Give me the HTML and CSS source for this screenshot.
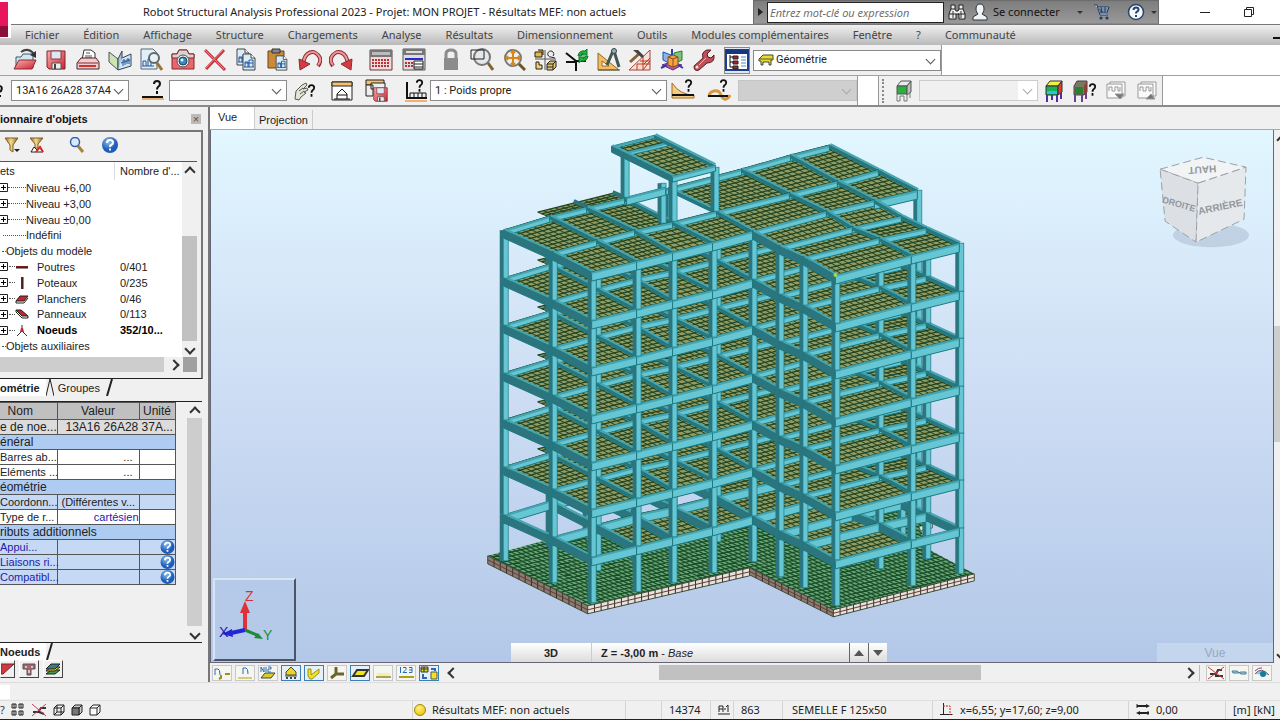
FILE: index.html
```html
<!DOCTYPE html>
<html lang="fr">
<head>
<meta charset="utf-8">
<title>Robot Structural Analysis Professional 2023</title>
<link rel="stylesheet" href="styles.css">
</head>
<body>
<svg class="defs" aria-hidden="true">
  <defs>
    <linearGradient id="gRed" x1="0" y1="0" x2="1" y2="1"><stop offset="0" stop-color="#f9b0b0"/><stop offset="1" stop-color="#cf2230"/></linearGradient>
    <radialGradient id="gBlue" cx=".4" cy=".3"><stop offset="0" stop-color="#8cc0f0"/><stop offset="1" stop-color="#1d5cb8"/></radialGradient>
    <linearGradient id="gGold" x1="0" x2="1"><stop offset="0" stop-color="#8a6420"/><stop offset=".45" stop-color="#f4dc90"/><stop offset="1" stop-color="#8a6420"/></linearGradient>
    <symbol id="help" viewBox="0 0 16 16"><circle cx="8" cy="8" r="8" fill="url(#gBlue)"/><path d="M5 6q0-3 3-3t3 2.500q0 1.500-2 2.500-1 .5-1 2M8 11.500v2" fill="none" stroke="#fff" stroke-width="2"/></symbol>
    <symbol id="plus" viewBox="0 0 9 9"><path d="M.5.5h8v8h-8z" fill="#fff" stroke="#222"/><path d="M2 4.500h5M4.500 2v5" stroke="#000"/></symbol>
    <symbol id="q" viewBox="0 0 10 14"><path d="M2 4q0-3 3-3t3 3q0 1.500-2 3-1 1-1 2.500M5 11v3" fill="none" stroke="#111" stroke-width="2"/></symbol>
    <symbol id="doc" viewBox="0 0 14 18"><path d="M1 1h8l4 4v12H1z" fill="#d8edf8" stroke="#444"/><path d="M9 1v4h4" fill="#fff" stroke="#444"/><path d="M3 14v-5h3v5M7 14v-7h4v7M2 14h10M3 10h8" fill="none" stroke="#28559a"/></symbol>
    <symbol id="floppy" viewBox="0 0 20 20"><path d="M1 1h18v18H3l-2-2z" fill="url(#gRed)" stroke="#7d2530"/><path d="M5 1h10v8H5z" fill="#dbe9f2" stroke="#8d3a45"/><path d="M6 13h9v6H6z" fill="#eee" stroke="#555"/><path d="M8 14h2v5H8z" fill="#444"/></symbol>
  </defs>
</svg>
<div class="app">
  <header class="titlebar">
    <span class="logo"></span>
    <h1 class="title">Robot Structural Analysis Professional 2023 - Projet: MON PROJET - Résultats MEF: non actuels</h1>
    <div class="info">
      <button class="info-arrow" aria-label="Développer"></button>
      <input class="search" type="text" placeholder="Entrez mot-clé ou expression" aria-label="Recherche">
      <button class="ghost" aria-label="Rechercher"><svg width="18" height="18" viewBox="0 0 18 18"><path d="M3 2h4v4l1 2h2l1-2V2h4v4l2 5v5h-6v-5H8v5H1v-5l2-5zM3 6h4M11 6h4M1 11h7M10 11h7" fill="#eee" stroke="#222"/><path d="M5 8v7M13 8v7" stroke="#333"/></svg></button>
      <button class="ghost signin"><svg width="16" height="18" viewBox="0 0 16 18"><path d="M8 1c3 0 4 2 4 5 0 2-1 4-2 5l5 3v3H1v-3l5-3C5 10 4 8 4 6c0-3 1-5 4-5z" fill="#eef3f8" stroke="#333"/></svg><span>Se connecter</span><i class="tri"></i></button>
      <button class="ghost cart" aria-label="Panier"><svg width="18" height="16" viewBox="0 0 18 16"><path d="M1 1h3l3 10h8M5 3h11l-2 6H7" fill="#dce6f5" stroke="#1f3864"/><path d="M6 5h9M7 7h8M8 3l1 6M12 3v6" stroke="#1f3864" fill="none"/><circle cx="8" cy="14" r="1.500" fill="#1f3864"/><circle cx="14" cy="14" r="1.500" fill="#1f3864"/></svg></button>
      <button class="ghost helpbtn" aria-label="Aide"><svg width="18" height="18" viewBox="0 0 18 18"><circle cx="9" cy="9" r="7.500" fill="#f4f7fb" stroke="#26446e" stroke-width="1.500"/><path d="M6.500 7q0-2.500 2.500-2.500t2.500 2.200q0 1.300-1.500 2-1 .6-1 1.800M9 12v2" fill="none" stroke="#26446e" stroke-width="2"/></svg><i class="tri"></i></button>
    </div>
    <div class="winbtns">
      <button class="ghost" aria-label="Réduire"><svg width="12" height="12"><path d="M1 6.500h10" stroke="#222"/></svg></button>
      <button class="ghost" aria-label="Restaurer"><svg width="12" height="12" viewBox="0 0 12 12"><path d="M1.500 3.500h7v7h-7zM3.500 3V1.500h7v7H9" fill="none" stroke="#222"/></svg></button>
    </div>
  </header>

  <nav class="menubar">
    <button>Fichier</button><button>Édition</button><button>Affichage</button><button>Structure</button><button>Chargements</button><button>Analyse</button><button>Résultats</button><button>Dimensionnement</button><button>Outils</button><button>Modules complémentaires</button><button>Fenêtre</button><button>?</button><button>Communauté</button>
    <span class="mdi-min"></span>
  </nav>

  <div class="toolbar tb1">
    <div class="group g11">
      <button aria-label="Ouvrir"><svg viewBox="0 0 24 24"><path d="M3 9h5l2-3h10v14H3z" fill="#cfe8f4" stroke="#456"/><path d="M1 21l5-9h17l-4 9z" fill="url(#gRed)" stroke="#8a2c30"/><path d="M8 4q7-5 13 2" fill="none" stroke="#444" stroke-width="2"/><path d="M23 3v7l-6-3z" fill="#333"/></svg></button>
      <button aria-label="Enregistrer"><svg viewBox="-2 -2 24 24"><use href="#floppy" width="20" height="20"/></svg></button>
      <button aria-label="Imprimer"><svg viewBox="0 0 24 24"><path d="M6 12l2-10h7l4 3v7z" fill="#fff" stroke="#333"/><path d="M10 5h4M9 8h7M9 10h7" stroke="#555"/><path d="M1 15l4-5h15l3 4v7H1z" fill="#f0cccc" stroke="#44252a"/><path d="M2 15h20" stroke="#8a2c35"/><path d="M3 18h17" stroke="#c33" stroke-width="2"/></svg></button>
      <button aria-label="Note de calcul"><svg viewBox="0 0 24 24"><path d="M1 4l9 7v11l-9-8z" fill="#cfe3b0" stroke="#456"/><path d="M10 11l4-8v12l-4 7z" fill="#a9c8d8" stroke="#345"/><path d="M10 22l13-4V6l-9 4" fill="#cfe6f2" stroke="#345"/><path d="M15 18v-6h2v5M19 16v-5h2v5M13 15l9-3" fill="none" stroke="#28559a"/></svg></button>
      <button aria-label="Aperçu"><svg viewBox="0 0 24 24"><path d="M2 1h12l4 4v16H2z" fill="#dff0f9" stroke="#567"/><path d="M4 18v-5h3v5M9 18v-7h3v7M3 18h12" fill="none" stroke="#28559a"/><circle cx="15" cy="10" r="5" fill="#e4f2fa" stroke="#666" stroke-width="2"/><path d="M18 15l5 7" stroke="#9b7335" stroke-width="3"/></svg></button>
      <button aria-label="Capture"><svg viewBox="0 0 24 24"><path d="M1 6h5l2-4h8l2 4h5v15H1z" fill="#e9666c" stroke="#83282c"/><path d="M1 6h5l2-4h8l2 4h5v4H1z" fill="#d8d2d2" stroke="#83282c"/><circle cx="12" cy="13" r="6" fill="#eee" stroke="#555"/><circle cx="12" cy="13" r="4" fill="#3a86c0" stroke="#245"/><circle cx="11" cy="12" r="1.500" fill="#dff"/></svg></button>
      <button aria-label="Supprimer"><svg viewBox="0 0 24 24"><path d="M2 2l20 20M21 2L3 21" stroke="#c43640" stroke-width="3"/><path d="M2 2l19 19M20 2L3 20" stroke="#ee8488"/></svg></button>
      <button aria-label="Copier"><svg viewBox="0 0 24 24"><use href="#doc" x="2" y="0" width="14" height="18"/><use href="#doc" x="8" y="5" width="14" height="18"/></svg></button>
      <button aria-label="Coller"><svg viewBox="0 0 24 24"><path d="M2 3h16v17H2z" fill="#c98a3a" stroke="#6a4316"/><path d="M6 1h8v4H6z" fill="#888" stroke="#333"/><use href="#doc" x="9" y="7" width="13" height="16"/></svg></button>
      <button aria-label="Annuler"><svg viewBox="0 0 24 24"><path d="M5 17C6 3 17 0 22 10q1 4-2 8" fill="none" stroke="#8c2b31" stroke-width="4"/><path d="M5 17C6 3 17 0 22 10q1 4-2 7" fill="none" stroke="#f0969a" stroke-width="2"/><path d="M1 11l11 5-10 6z" fill="#d53c42" stroke="#8c2b31"/></svg></button>
      <button aria-label="Rétablir"><svg viewBox="0 0 24 24"><path d="M19 17C18 3 7 0 2 10q-1 4 2 8" fill="none" stroke="#8c2b31" stroke-width="4"/><path d="M19 17C18 3 7 0 2 10q-1 4 2 7" fill="none" stroke="#f0969a" stroke-width="2"/><path d="M23 11l-11 5 10 6z" fill="#d53c42" stroke="#8c2b31"/></svg></button>
    </div>
    <div class="group g2">
      <button aria-label="Calculer"><svg viewBox="0 0 24 24"><path d="M1 2h22v20H1z" fill="#f3d8d8" stroke="#5a3c3e"/><path d="M1 2h22v7H1z" fill="#777"/><path d="M3 4h18v3H3z" fill="#bbb"/><path d="M3 12h18M3 15h18M3 18h18" stroke="#b8323c" stroke-width="2" stroke-dasharray="2 1"/></svg></button>
      <button aria-label="Options de calcul"><svg viewBox="0 0 24 24"><path d="M1 1h22v21H1z" fill="#ddd" stroke="#555"/><path d="M1 1h22v6H1z" fill="#777"/><path d="M4 3h16v2H4z" fill="#ddd"/><path d="M3 11h18" stroke="#2a2ad0" stroke-width="2"/><path d="M3 15h8M3 18h8" stroke="#b8323c" stroke-width="2" stroke-dasharray="2 1"/><path d="M12 13h9v8h-9zM12 16h9M12 19h9" fill="#fff" stroke="#222"/></svg></button>
    </div>
    <div class="group g9">
      <button aria-label="Verrou"><svg viewBox="0 0 24 24"><path d="M7 11V6q0-4 5-4t5 4v5" fill="none" stroke="#8c8c8c" stroke-width="3"/><path d="M5 10h14v12H5z" fill="#8c8c8c"/></svg></button>
      <button aria-label="Zoom fenêtre"><svg viewBox="0 0 24 24"><circle cx="12" cy="9" r="8" fill="#e4e8ea" stroke="#777" stroke-width="2"/><path d="M1 2h13v9H1z" fill="none" stroke="#222"/><path d="M18 15l5 7" stroke="#7d6433" stroke-width="3"/></svg></button>
      <button aria-label="Zoom tout"><svg viewBox="0 0 24 24"><circle cx="11" cy="10" r="8" fill="#eee" stroke="#777" stroke-width="2"/><path d="M11 3v14M4 10h14M9 5l2-2 2 2M9 15l2 2 2-2M6 8l-2 2 2 2M16 8l2 2-2 2" fill="none" stroke="#d78618" stroke-width="2"/><path d="M17 16l6 6" stroke="#6b5426" stroke-width="3"/></svg></button>
      <button aria-label="Vues"><svg viewBox="0 0 24 24"><path d="M12 2v20M2 11h21" stroke="#555"/><path d="M2 4h7v5H2zM5 2h5v5" fill="#e5b640" stroke="#222"/><path d="M20 8a3 3 0 1 0-2 1l4 1" fill="none" stroke="#222"/><path d="M3 14h3v3h3v4H3z" fill="#f5d268" stroke="#222"/><path d="M14 16l3-3h6v6l-3 3h-6zM14 16h6v6M20 16l3-3M14 19h6" fill="#e9c768" stroke="#222"/></svg></button>
      <button aria-label="Repère"><svg viewBox="0 0 24 24"><path d="M11 12v11M1 5l10 8h10M1 14h10" stroke="#111" stroke-width="2" fill="none"/><path d="M13 8q1-6 7-5l2-2v6h-6l2-2-2 3z" fill="#20b040" stroke="#0a7a28"/><path d="M23 8q-1 6-7 5l-2 2V9h6l-2 2 3-3z" fill="#20b040" stroke="#0a7a28"/></svg></button>
      <button aria-label="Géométrie"><svg viewBox="0 0 24 24"><path d="M1 5v17h21z" fill="#f5bd60" stroke="#8b6a2b"/><path d="M5 13v5h7z" fill="#fff" stroke="#8b6a2b"/><path d="M16 3l-6 14M17 3l5 16" stroke="#455" stroke-width="3"/><circle cx="17" cy="3" r="2.500" fill="#9ab" stroke="#344"/><path d="M1 22h22" stroke="#555"/></svg></button>
      <button aria-label="Structure"><svg viewBox="0 0 24 24"><path d="M1 22L22 2v20z" fill="#f8e2d4" stroke="#a54540"/><path d="M9 22v-6M15 22V9M9 16h13M15 22l7-9M16 16l6-6M12 13h10" stroke="#c8321e" fill="none"/><path d="M2 14L12 5" stroke="#8a6030" stroke-width="3"/><path d="M5 2l9 8 2-2-6-6z" fill="#444"/></svg></button>
      <button aria-label="Vue 3D"><svg viewBox="0 0 24 24"><path d="M3 4l8 3v9l-8-4z" fill="#8db5e8" stroke="#1f50a8"/><path d="M14 5l8-2v9l-8 4z" fill="#7cc47e" stroke="#257a2c"/><path d="M2 17l9-3 11 3-9 5z" fill="#b7559e" stroke="#6b2a80"/><path d="M8 9l5-2 5 2v8l-5 2-5-2z" fill="#f1a545" stroke="#8a4a1a"/><path d="M8 9l5 2 5-2M13 11v8" fill="none" stroke="#8a4a1a"/><path d="M12 1v6M1 20l6-3M23 20l-5-3" stroke="#2b3fb0" stroke-width="2"/></svg></button>
      <button aria-label="Outils"><svg viewBox="0 0 24 24"><path d="M3 18l9-8q-2-6 4-8l4 0-4 4 1 3 3 1 3-3q1 8-7 8L8 22q-5 2-5-4z" fill="#c05058" stroke="#5a1a20"/><circle cx="6" cy="19" r="1.500" fill="#f6dede"/><path d="M8 17l7-7" stroke="#eeb4b8"/></svg></button>
    </div>
    <button class="pressed" aria-label="Disposition"><svg viewBox="0 0 24 24"><path d="M1 2h22v20H1z" fill="#fff" stroke="#1b3f8c" stroke-width="2"/><path d="M1 2h22v4H1z" fill="#16357d"/><path d="M5 7v12M5 9h4M5 14h4M5 19h4" stroke="#111"/><path d="M8 8h5v3H8zM8 13h5v3H8zM8 18h5v3H8z" fill="#a23" stroke="#222"/><path d="M16 9h5M16 12h5M16 15h5M16 18h5" stroke="#4a8ad0"/></svg></button>
    <label class="combo layout"><svg width="16" height="14" viewBox="0 0 16 14"><path d="M1 6l4-4h10v5h-2v5h-2V9H5v3H3V8H1z" fill="#e6de20" stroke="#444"/><path d="M2 6h12" stroke="#555"/></svg><select aria-label="Disposition"><option>Géométrie</option></select></label>
    <span class="tb-end"></span>
  </div>

  <div class="toolbar tb2">
    <svg class="cropq" viewBox="0 0 11 24"><path d="M0 7q3 1 1 5l-1 1M0 17h1" fill="none" stroke="#111" stroke-width="2"/></svg>
    <label class="combo c-node"><select aria-label="Sélection noeuds"><option>13A16 26A28 37A4</option></select></label>
    <button class="w39" aria-label="Sélection barres"><svg viewBox="0 0 24 24"><use href="#q" x="11" y="1" width="10" height="14"/><path d="M1 18h21" stroke="#111" stroke-width="2"/><path d="M1 20h22" stroke="#efb276" stroke-width="2"/></svg></button>
    <label class="combo c-bar"><select aria-label="Barres"><option></option></select></label>
    <button class="w34" aria-label="Sélection spéciale"><svg viewBox="0 0 24 24"><path d="M2 20l1-8 6-6 4-2 1 2-4 4 4-1 1 2-4 2 2 1-5 4-2 3z" fill="#e4e6d4" stroke="#555"/><path d="M6 12l4-3M7 15l4-3" stroke="#555"/><use href="#q" x="14" y="5" width="9" height="13"/></svg></button>
    <button class="w40" aria-label="Attributs"><svg viewBox="0 0 24 24"><path d="M2 3h20v18H2z" fill="#fff" stroke="#222"/><path d="M2 3h20v4H2z" fill="#f5c070" stroke="#222"/><path d="M7 20v-5l5-5 5 5v5M7 16h10M4 20h16" fill="none" stroke="#111"/></svg></button>
    <button class="w32" aria-label="Enregistrer attributs"><svg viewBox="0 0 24 24"><path d="M1 1h18v5H1z" fill="#f5c070" stroke="#222"/><path d="M1 6h7v11H1zM6 4h14v6H6z" fill="#eee" stroke="#222"/><use href="#floppy" x="8" y="8" width="15" height="15"/></svg></button>
    <button class="w44" aria-label="Charges"><svg viewBox="0 0 24 24"><path d="M3 3v16h20" fill="none" stroke="#111" stroke-width="2"/><path d="M6 18v-4h16v4M10 14v4M14 14v4M18 14v4" fill="none" stroke="#111"/><path d="M1 22h22" stroke="#efb276" stroke-width="2"/><use href="#q" x="11" y="0" width="9" height="13"/></svg></button>
    <label class="combo c-case"><select aria-label="Cas de charge"><option>1 : Poids propre</option></select></label>
    <button class="w32" aria-label="Mode"><svg viewBox="0 0 24 24"><path d="M1 4v15h22v-3Q9 16 1 4z" fill="#f4cd85" stroke="#a96b22"/><path d="M1 16h22" stroke="#111" stroke-width="2"/><use href="#q" x="13" y="0" width="9" height="13"/></svg></button>
    <button class="w40" aria-label="Déformée"><svg viewBox="0 0 24 24"><path d="M2 18q0-5 5-6t7 4 5 4 4-4" fill="none" stroke="#d79845" stroke-width="3"/><path d="M1 17h20" stroke="#111" stroke-width="2"/><use href="#q" x="12" y="0" width="9" height="13"/></svg></button>
    <label class="combo c-off"><select disabled aria-label="Mode propre"><option></option></select></label>
    <span class="gapwhite"></span>
    <div class="phase">
      <span class="grip"></span>
      <button aria-label="Phases"><svg viewBox="0 0 24 24"><path d="M5 7l4-5h10l-4 5z" fill="#e8ece8" stroke="#555"/><path d="M5 7h10v8H5z" fill="#28b040" stroke="#555"/><path d="M15 7l4-5v11l-4 3z" fill="#b8c0b8" stroke="#555"/><path d="M5 15v7h3v-5h4v5h3v-7M18 13v6" fill="none" stroke="#777"/></svg></button>
      <label class="combo c-phase"><select disabled aria-label="Phase"><option></option></select></label>
      <button aria-label="Phase active"><svg viewBox="0 0 24 24"><path d="M4 7l4-5h12l-4 5z" fill="#f3ef40" stroke="#333"/><path d="M4 7h12v9H4z" fill="#18b058" stroke="#333"/><path d="M16 7l4-5v11l-4 3z" fill="#e03c30" stroke="#333"/><path d="M5 12h10v3H5z" fill="#30c0e0"/><path d="M5 16v7M10 16v5M15 16v7M19 14v6" stroke="#5030a0" stroke-width="2"/></svg></button>
      <button aria-label="Aide phase"><svg viewBox="0 0 24 24"><path d="M1 7l3-5h10v11l-3 3H1z" fill="#777a60" stroke="#444"/><path d="M2 8h8v7H2z" fill="#2a8030"/><path d="M11 7l3-5v11l-3 3z" fill="#8a4038"/><path d="M2 16v7M9 16v7M13 14v6" stroke="#704090" stroke-width="2"/><use href="#q" x="15" y="4" width="9" height="13"/></svg></button>
      <button aria-label="Descendre"><svg viewBox="0 0 24 24" fill="#fafafa" stroke="#999"><path d="M6 3h15v14H6z"/><path d="M3 5h15v14H3z"/><path d="M5 12V8h3v4h3V8h3v4h2V8"/><path d="M11 15h9l-4 5z" fill="#777"/></svg></button>
      <button aria-label="Monter"><svg viewBox="0 0 24 24" fill="#fafafa" stroke="#999"><path d="M6 3h15v14H6z"/><path d="M3 5h15v14H3z"/><path d="M5 12V8h3v4h3V8h3v4h2V8"/><path d="M11 20h9l-4-5z" fill="#777"/></svg></button>
    </div>
  </div>

  <main class="work">
    <aside class="side">
      <div class="side-head"><h2>ionnaire d'objets</h2><button class="close" aria-label="Fermer">×</button></div>
      <div class="inspector">
        <div class="filters">
          <button aria-label="Filtrer"><svg width="16" height="16" viewBox="0 0 16 16"><path d="M1 1h13L9 8v7l-3-2V8z" fill="url(#gGold)" stroke="#806020"/><path d="M10 12h6l-3 3z" fill="#222"/></svg></button>
          <button aria-label="Filtre spécial"><svg width="16" height="16" viewBox="0 0 16 16"><path d="M1 1h13L9 7v4H6V7z" fill="url(#gGold)" stroke="#806020"/><path d="M2 15l3-5 3 3 3-3 3 5z" fill="#fff" stroke="#222"/><path d="M7 15l4-5 3 5" fill="none" stroke="#d22" stroke-width="2"/></svg></button>
          <button class="find" aria-label="Chercher"><svg width="16" height="16" viewBox="0 0 16 16"><path d="M9 9l5 6" stroke="#a8843a" stroke-width="3"/><circle cx="6" cy="5" r="4.500" fill="#d5ebfb" stroke="#3860a8" stroke-width="1.500"/></svg></button>
          <button class="hlp" aria-label="Aide"><svg width="16" height="16"><use href="#help"/></svg></button>
        </div>
        <div class="tree-area">
          <div class="tree">
            <div class="tree-head"><span>ets</span><span>Nombre d'...</span></div>
            <ul class="nodes">
              <li><svg class="pm"><use href="#plus"/></svg><i class="dots"></i><span>Niveau +6,00</span></li>
              <li><svg class="pm"><use href="#plus"/></svg><i class="dots"></i><span>Niveau +3,00</span></li>
              <li><svg class="pm"><use href="#plus"/></svg><i class="dots"></i><span>Niveau ±0,00</span></li>
              <li><i class="dots long"></i><span>Indéfini</span></li>
              <li><i class="dots tiny"></i><span>Objets du modèle</span></li>
              <li><svg class="pm"><use href="#plus"/></svg><i class="dots sm"></i><svg class="gl" viewBox="0 0 14 12"><path d="M1 6h12" stroke="#7c1a1a" stroke-width="2"/><path d="M1 7h12" stroke="#222"/></svg><span class="nm">Poutres</span><span>0/401</span></li>
              <li><svg class="pm"><use href="#plus"/></svg><i class="dots sm"></i><svg class="gl" viewBox="0 0 14 12"><path d="M7 0v12" stroke="#7c1a1a" stroke-width="2"/><path d="M8 0v12" stroke="#222"/></svg><span class="nm">Poteaux</span><span>0/235</span></li>
              <li><svg class="pm"><use href="#plus"/></svg><i class="dots sm"></i><svg class="gl" viewBox="0 0 14 12"><path d="M1 8l4-5h8L9 8z" fill="#c4262c" stroke="#222"/><path d="M1 8v2h8l4-5" fill="none" stroke="#222"/></svg><span class="nm">Planchers</span><span>0/46</span></li>
              <li><svg class="pm"><use href="#plus"/></svg><i class="dots sm"></i><svg class="gl" viewBox="0 0 14 12"><path d="M1 2h5l7 6H7z" fill="#c4262c" stroke="#222"/><path d="M1 2v2l6 6h6V8" fill="none" stroke="#222"/></svg><span class="nm">Panneaux</span><span>0/113</span></li>
              <li class="sel"><svg class="pm"><use href="#plus"/></svg><i class="dots sm"></i><svg class="gl" viewBox="0 0 14 12"><path d="M7 1v6l-5 5M7 7l5 5" fill="none" stroke="#333"/><path d="M6 4h2l1 4H5z" fill="#c4262c"/></svg><span class="nm">Noeuds</span><span>352/10...</span></li>
              <li><i class="dots tiny"></i><span>Objets auxiliaires</span></li>
            </ul>
          </div>
          <div class="vbar"><i class="chev up"></i><i class="thumb t1"></i><i class="chev down"></i></div>
        </div>
        <div class="hbar-left"><span class="hthumb"></span><i class="chev right"></i><span class="corner"></span></div>
      </div>
      <div class="tabs"><button class="tab on">ométrie</button><svg width="8" height="17"><path d="M0 17L4 0l4 17" fill="none" stroke="#222"/></svg><button class="tab">Groupes</button><svg width="8" height="17"><path d="M1 17L6 0" stroke="#222" stroke-width="2"/></svg></div>
      <div class="props">
        <table class="grid">
          <colgroup><col class="k1"><col class="k2"><col class="k3"></colgroup>
          <thead><tr><th>Nom</th><th>Valeur</th><th>Unité</th></tr></thead>
          <tbody>
            <tr class="gray"><td>e de noe...</td><td colspan="2" class="pad">13A16 26A28 37A...</td></tr>
            <tr class="sec"><td colspan="3">énéral</td></tr>
            <tr><td>Barres ab...</td><td class="r">...</td><td></td></tr>
            <tr><td>Eléments ...</td><td class="r">...</td><td></td></tr>
            <tr class="sec"><td colspan="3">éométrie</td></tr>
            <tr class="blue"><td>Coordonn...</td><td class="pad4">(Différentes v...</td><td></td></tr>
            <tr><td>Type de r...</td><td class="r0 link">cartésien</td><td></td></tr>
            <tr class="sec"><td colspan="3">ributs additionnels</td></tr>
            <tr class="blue link"><td>Appui...</td><td></td><td class="r0"><svg width="15" height="14"><use href="#help"/></svg></td></tr>
            <tr class="blue link"><td>Liaisons ri...</td><td></td><td class="r0"><svg width="15" height="14"><use href="#help"/></svg></td></tr>
            <tr class="blue link"><td>Compatibl...</td><td></td><td class="r0"><svg width="15" height="14"><use href="#help"/></svg></td></tr>
          </tbody>
        </table>
        <div class="vbar"><i class="chev up"></i><i class="thumb t2"></i><i class="chev down"></i></div>
      </div>
      <div class="tabs bottom"><button class="tab on">Noeuds</button><svg width="8" height="17"><path d="M1 17L6 0" stroke="#222" stroke-width="2"/></svg></div>
      <div class="minis">
        <button aria-label="Barre"><svg width="14" height="14" viewBox="0 0 14 14"><path d="M0 2h13L2 12H0z" fill="#cf3a42" stroke="#7c2026"/></svg></button>
        <button aria-label="Section"><svg width="14" height="14" viewBox="0 0 14 14"><path d="M1 2h12v5H9v6H5V7H1z" fill="#a8626a" stroke="#555"/><path d="M3 4h2v2H3zM9 4h2v2H9zM6 8h2v3H6z" fill="#e8c0c0"/></svg></button>
        <button aria-label="Couches"><svg width="16" height="14" viewBox="0 0 16 14"><path d="M1 12l5-4h9l-5 4z" fill="#38a040" stroke="#222"/><path d="M1 9l5-4h9l-5 4z" fill="#e8d020" stroke="#222"/><path d="M1 7l5-5h9l-5 5z" fill="#3f7a80" stroke="#222"/></svg></button>
      </div>
    </aside>

    <section class="view">
      <div class="view-tabs"><button class="vt on">Vue</button><button class="vt">Projection</button></div>
      <div class="stage">
        <div class="canvas">
          <svg class="model" id="model" viewBox="211 131 1063 532" role="img" aria-label="Modèle 3D du bâtiment"></svg>
          <div class="axes"><svg width="80" height="80" viewBox="0 0 80 80"><path d="M30 50V28" stroke="#e03038" stroke-width="4"/><path d="M30 21l5 12H25z" fill="#e03038"/><path d="M30 50l-14 3" stroke="#2424d8" stroke-width="4"/><path d="M7 54l10-5 1 8z" fill="#2424d8"/><path d="M30 50l12 5" stroke="#208a38" stroke-width="3"/><path d="M48 59l-9-1 4-5z" fill="#208a38"/><text x="30" y="21" fill="#d83038">Z</text><text x="4" y="57" fill="#1818b0">X</text><text x="48" y="60" fill="#208a38">Y</text></svg></div>
          <div class="level"><button class="mode">3D</button><button class="lvl"><b>Z = -3,00 m</b> - <i>Base</i></button><button class="step" aria-label="Niveau supérieur"><i class="t-up"></i></button><button class="step" aria-label="Niveau inférieur"><i class="t-down"></i></button></div>
          <button class="vuebtn">Vue</button>
        </div>
        <div class="edge"><i class="chev up"></i><span class="edge-thumb"></span><i class="chev down"></i></div>
      </div>
      <div class="view-foot">
        <div class="disp">
          <button aria-label="Numéros de noeuds"><svg viewBox="0 0 18 14"><path d="M2 9V3h3q2 0 2 6" fill="none" stroke="#2a6ab8"/><path d="M12 8h5M8 9v3l-2 1" stroke="#a09010" stroke-width="2"/></svg></button>
          <button aria-label="Numéros de barres"><svg viewBox="0 0 18 14"><path d="M7 8V2h3q2 0 2 6" fill="none" stroke="#2a6ab8"/><path d="M2 12h2M14 12h2M4 12h10" stroke="#b0a010"/></svg></button>
          <button aria-label="Panneaux"><svg viewBox="0 0 18 14"><path d="M2 12l4-5h10l-4 5z" fill="#d8d020" stroke="#444"/><path d="M2 6V1l3 5V1M7 1v5M9 1h3v2H9v3h3" fill="none" stroke="#2a6ab8"/></svg></button>
          <button class="on" aria-label="Appuis"><svg viewBox="0 0 18 14"><path d="M9 1l5 5v3H4V6z" fill="#e8d820" stroke="#444"/><path d="M3 10h12" stroke="#444"/><path d="M4 12h2M8 12h2M12 12h2" stroke="#444" stroke-width="2"/></svg></button>
          <button class="on" aria-label="Sections"><svg viewBox="0 0 18 14"><path d="M3 3h3v6l8-6v4l-7 6H5l-2-3z" fill="#f0e420" stroke="#a09010"/></svg></button>
          <button aria-label="Repères locaux"><svg viewBox="0 0 18 14"><path d="M8 1v7l-5 4M8 8h8" fill="none" stroke="#6b6430" stroke-width="3"/></svg></button>
          <button class="on" aria-label="Épaisseurs"><svg viewBox="0 0 18 14"><path d="M2 10l4-6h11l-4 6z" fill="#f0e420" stroke="#333" stroke-width="2"/></svg></button>
          <button aria-label="Charges"><svg viewBox="0 0 18 14"><path d="M2 11h15" stroke="#a8a060" stroke-width="2"/><path d="M3 7h13v3H3z" fill="#f8f0a0"/></svg></button>
          <button aria-label="Valeurs"><svg viewBox="0 0 18 14"><path d="M3.500 1v6M6 1.500h3v2L6 6.500h4M12 1.500h3v5h-3M12 4h3" fill="none" stroke="#2a6ab8"/><path d="M2 11h15" stroke="#b0a010" stroke-width="2"/></svg></button>
          <button class="on" aria-label="Affichage"><svg viewBox="0 0 18 14"><path d="M1 1h7v5H1zM4 1v5M1 3h7" fill="#e0d820" stroke="#333"/><path d="M11 6h6v7h-6z" fill="#f0e420" stroke="#555"/><path d="M11 3h4v2M3 8v4h4" fill="none" stroke="#2a6ab8" stroke-width="2"/></svg></button>
        </div>
        <i class="chev left"></i>
        <div class="track"><span class="track-thumb"></span></div>
        <i class="chev right"></i>
        <div class="disp r3">
          <button aria-label="Masquer"><svg viewBox="0 0 18 14"><path d="M3 8h6l2-4h4M8 10h8" stroke="#333" stroke-width="2" fill="none"/><path d="M1 1l16 12M17 1L1 13" stroke="#d03848"/></svg></button>
          <button aria-label="Lunettes"><svg viewBox="0 0 18 14"><path d="M2 5h5l4 3h5V6h-5L8 7H3z" fill="#9fd0e8" stroke="#4a7898"/></svg></button>
          <button aria-label="Visibilité"><svg viewBox="0 0 18 14"><path d="M2 8q6-8 14 1" fill="#90c8e0" stroke="#667"/><circle cx="10" cy="8" r="3" fill="#1a7a9a"/><path d="M2 5q4-4 7-3" stroke="#a33a80" fill="none"/></svg></button>
        </div>
      </div>
    </section>
  </main>

  <div class="cmd"><span class="cmd-field"></span></div>

  <footer class="status">
    <div class="st icons">
      <span>?</span>
      <svg width="14" height="14" viewBox="0 0 14 14"><path d="M1 5V1h4v4zM8 5V1h4v4zM1 12V8h4v4zM8 12V8h4v4zM3 1v4M10 1v4M3 8v4M10 8v4" fill="none" stroke="#222"/></svg>
      <svg width="16" height="14" viewBox="0 0 16 14"><path d="M2 9h5l3-4h5M8 9l5 2" fill="none" stroke="#333" stroke-width="2"/><path d="M1 1l14 12M15 1L1 13" stroke="#c04060"/></svg>
      <svg width="12" height="12" viewBox="0 0 12 12"><path d="M1 4h7v7H1zM1 4l3-3h7v7l-3 3M8 4l3-3M4 1v7h7M4 8l-3 3" fill="none" stroke="#222"/></svg>
      <svg width="12" height="12" viewBox="0 0 12 12"><path d="M1 4l3-3h7v7l-3 3V4zM8 4l3-3" fill="#ccc" stroke="#222"/><path d="M1 4h7v7H1z" fill="#777" stroke="#222"/></svg>
      <svg width="12" height="12" viewBox="0 0 12 12"><path d="M1 4l3-3h7v7l-3 3H1zM1 4h7v7M8 4l3-3" fill="#fff" stroke="#222"/></svg>
    </div>
    <div class="st res"><span class="dot"></span>Résultats MEF: non actuels</div>
    <div class="st"></div>
    <div class="st">14374</div>
    <div class="st"><svg width="12" height="12" viewBox="0 0 12 12"><path d="M1 8V2h4v6M1 5h4M6 5h2M10 8V1L8 3M0 10h12" fill="none" stroke="#222"/></svg></div>
    <div class="st">863</div>
    <div class="st sec">SEMELLE F 125x50</div>
    <div class="st"><svg width="14" height="14" viewBox="0 0 14 14"><path d="M3.500 0v11.500h9M0 11.500h4" fill="none" stroke="#222"/><path d="M3 3h7v9" fill="none" stroke="#c22" stroke-dasharray="2 1"/></svg>x=6,55; y=17,60; z=9,00</div>
    <div class="st"><svg width="14" height="12" viewBox="0 0 14 12"><path d="M1 2h11M3 9h10" stroke="#222" stroke-width="2"/><path d="M1 0v4M12 7v4" stroke="#222"/><path d="M0 9l4-2v4zM14 2l-4-2v4z" fill="#222"/></svg>0,00</div>
    <div class="st">[m] [kN]</div>
  </footer>
</div>
<script src="model.js"></script>
</body>
</html>
```

FILE: styles.css
```css
* { box-sizing: border-box; }
body { margin: 0; background: #f0f0f0; font: 11px/14px "Liberation Sans", Arial, sans-serif; color: #222; }
button { font: inherit; color: inherit; border: 0; background: none; padding: 0; margin: 0; }
h1, h2, ul { margin: 0; padding: 0; font-weight: normal; }
.defs { position: absolute; width: 0; height: 0; }
.app { display: flex; flex-direction: column; height: 100vh; overflow: hidden; }

/* Title bar */
.titlebar { display: flex; align-items: flex-start; height: 24px; background: #fff; font: 11px/24px "Noto Sans", sans-serif; position: relative; z-index: 1; }
.logo { width: 11px; height: 36px; margin-top: 2px; background: linear-gradient(#e8175d 0 24px, #8c0f38 24px); border-right: 3px solid #fff; border-bottom: 1px solid #fff; }
.title { flex: 1; padding-left: 132px; font-size: 11px; color: #222; white-space: nowrap; }
.info { display: flex; align-items: center; width: 406px; height: 24px; background: linear-gradient(#7d7d7d, #999); border: 1px solid #6c6c6c; border-bottom-color: #888; }
.info-arrow { width: 13px; height: 22px; display: grid; place-items: center; }
.info-arrow::before { content: ""; border: 4px solid transparent; border-left: 5px solid #222; border-right: 0; }
.search { width: 177px; height: 21px; border: 1px solid #222; background: #fff; padding: 0 2px; font: italic 11px "Open Sans", sans-serif; flex: none; }
.search::placeholder { color: #666; opacity: 1; }
.ghost { display: flex; align-items: center; white-space: nowrap; flex: none; }
.info .ghost { margin-left: 4px; }
.info .signin { margin-left: 6px; gap: 5px; color: #111; font: 11px/20px "Noto Sans", sans-serif; }
.tri { border: 3px solid transparent; border-top-color: #333; border-bottom: 0; }
.signin .tri { margin-left: 12px; }
.info .cart { margin-left: 10px; }
.info .helpbtn { margin-left: 16px; gap: 6px; }
.winbtns { display: flex; gap: 32px; width: 121px; height: 24px; padding-left: 40px; }

/* Menu */
.menubar { display: flex; gap: 24px; align-items: center; height: 21px; padding-left: 25px; background: linear-gradient(#f0f0f0, #b9b9b9); border-top: 1px solid #777; font: 11px/20px "Noto Sans", sans-serif; color: #444; white-space: nowrap; }
.mdi-min { margin-left: auto; width: 7px; height: 2px; margin-top: 6px; background: #111; }

/* Toolbars */
.toolbar { display: flex; align-items: center; background: #fff; border-bottom: 1px solid #a0a0a0; }
.toolbar button { display: grid; place-items: center; flex: none; }
.toolbar button svg { width: 24px; height: 24px; }
.tb1 { height: 31px; padding-left: 9px; background: linear-gradient(90deg, #f0f0f0 942px, #fff 942px); }
.tb2 { height: 31px; background: #f0f0f0; border-bottom: 2px solid #8a8a8a; }
.group { display: grid; flex: none; }
.g11 { grid-template-columns: repeat(11, 1fr); width: 348px; }
.g2 { grid-template-columns: repeat(2, 1fr); width: 66px; margin-left: 7px; }
.g9 { grid-template-columns: repeat(9, 1fr); width: 284px; margin-left: 5px; }
.toolbar .pressed { width: 26px; height: 27px; margin-left: 5px; border: 1px solid #888; background: #e2e6ee; }
.combo { display: flex; align-items: center; position: relative; height: 21px; border: 1px solid #8a8a8a; background: #fff; flex: none; }
.combo select { appearance: none; flex: 1; min-width: 0; width: 100%; border: 0; background: none; margin: 0; padding: 0 14px 0 4px; font: 11px/18px "Roboto", sans-serif; color: #222; opacity: 1; }
.layout select { padding-left: 2px; }
.combo::after, .chev::before { content: ""; width: 6px; height: 6px; border: solid #555; border-width: 0 1px 1px 0; transform: rotate(45deg); }
.combo::after { position: absolute; right: 6px; top: 5px; }
.layout { width: 188px; margin-left: 3px; padding-left: 4px; }
.tb-end { height: 30px; border-left: 1px solid #999; }
.cropq { width: 11px; height: 24px; flex: none; }
.c-node, .c-bar { width: 118px; }
.c-case { width: 237px; }
.c-off { width: 119px; background: #cfcfcf; border-color: #c4c4c4; }
.c-off::after, .c-phase::after { border-color: #aaa; }
.c-phase { width: 119px; border-color: #ccc; background: linear-gradient(90deg, #f0f0f0 98px, #fff 98px); }
.w39 { width: 40px; padding-left: 8px; }
.w34 { width: 35px; }
.w40 { width: 39px; }
.w32 { width: 32px; }
.w44 { width: 37px; padding-left: 8px; }
.gapwhite { width: 22px; align-self: stretch; background: #fff; border-left: 1px solid #999; border-right: 1px solid #999; }
.phase { display: flex; align-items: center; align-self: stretch; border-right: 1px solid #999; flex: none; }
.phase button { width: 31px; }
.grip { width: 1px; height: 24px; margin: 0 4px 0 3px; border-left: 2px dotted #888; }
.toolbar.tb2::after { content: ""; flex: 1; align-self: stretch; background: #fff; }

/* Work area */
.work { flex: 1; display: flex; min-height: 0; }
.side { width: 210px; flex: none; display: flex; flex-direction: column; padding-right: 5px; border-right: 2px solid #777; background: #f0f0f0; overflow: hidden; white-space: nowrap; }
.side-head { display: flex; justify-content: space-between; align-items: center; height: 23px; flex: none; }
.side-head h2 { font-weight: bold; font-size: 11px; color: #111; }
.close { width: 10px; height: 10px; margin-right: 2px; background: #bbb; color: #555; line-height: 10px; font-size: 11px; }
.inspector { border: 2px solid #777; border-left: 0; border-bottom: 1px solid #222; padding-right: 4px; height: 249px; flex: none; }
.filters { display: flex; align-items: center; height: 29px; padding-left: 4px; gap: 9px; }
.filters .find { margin-left: 15px; }
.filters .hlp { margin-left: 8px; }
.tree-area { display: flex; height: 196px; border-top: 1px solid #555; background: #fff; }
.tree { flex: 1; overflow: hidden; }
.tree-head { display: flex; height: 18px; line-height: 18px; }
.tree-head span:first-child { width: 115px; border-right: 1px solid #ddd; }
.tree-head span:last-child { padding-left: 5px; }
.nodes { list-style: none; display: grid; grid-auto-rows: 1fr; height: 174px; }
.nodes li { display: flex; align-items: center; }
.pm { width: 9px; height: 9px; margin-left: -1px; flex: none; }
.dots { width: 18px; height: 1px; border-top: 1px dotted #555; flex: none; }
.dots.long { width: 23px; margin-left: 3px; }
.dots.tiny { width: 4px; margin-left: 2px; }
.dots.sm { width: 6px; margin-left: 1px; }
.gl { width: 14px; height: 12px; flex: none; }
.gl + .nm { width: 91px; padding-left: 8px; flex: none; }
.nodes .sel { font-weight: bold; color: #000; }
.vbar { width: 15px; flex: none; background: #f0f0f0; display: flex; flex-direction: column; align-items: center; }
.chev { display: grid; place-items: center; width: 15px; height: 16px; flex: none; }
.chev::before { border-color: #333; border-width: 0 2px 2px 0; }
.chev.up::before { transform: translateY(2px) rotate(225deg); }
.chev.right::before { transform: rotate(-45deg); }
.chev.left::before { transform: rotate(135deg); }
.thumb { width: 15px; background: #c1c1c1; }
.t1 { flex: 1; margin-top: 58px; }
.t2 { flex: 1; background: #cdcdcd; }
.hbar-left { display: flex; height: 15px; background: #f0f0f0; }
.hthumb { width: 164px; background: #cdcdcd; }
.hbar-left .chev { width: 19px; height: 15px; }
.corner { flex: 1; background: #a0a0a0; }
.tabs { display: flex; align-items: flex-start; height: 23px; flex: none; border-bottom: 1px solid #222; margin-right: 1px; }
.tab { padding: 0 6px 0 0; height: 17px; }
.tab.on { font-weight: bold; background: #fff; }
.tabs svg + .tab { padding-left: 4px; }
.props { display: flex; justify-content: space-between; height: 240px; flex: none; padding-right: 1px; }
.grid { border-collapse: collapse; table-layout: fixed; width: 175px; align-self: flex-start; background: #fff; }
.k1 { width: 57px; } .k2 { width: 82px; } .k3 { width: 36px; }
.grid th { height: 17px; background: #c0c0c0; font-weight: normal; font-size: 12px; padding: 0; border: 1px solid #555; }
.grid th:first-child { padding-right: 16px; }
.grid td { height: 15px; line-height: 14px; padding: 0; border: 1px solid #555; }
.grid td:first-child, .grid th:first-child { border-left: 0; }
.grid .gray td { background: #dcdcdc; font-size: 12px; }
.grid .sec td { background: #aecbf2; font-size: 12px; }
.grid .blue td { background: #c6d9f4; }
.grid .link, .grid .link td { color: #2222a8; }
.grid td.pad { padding-left: 8px; }
.grid td.pad4 { padding-left: 4px; }
.grid td.r { text-align: right; padding-right: 6px; }
.grid td.r0 { text-align: right; }
.grid td svg { display: block; margin-left: auto; }
.tabs.bottom { border: 0; border-top: 1px solid #222; height: 18px; padding: 0; }
.minis { display: flex; gap: 4px; height: 18px; flex: none; }
.minis button { width: 20px; height: 18px; border: 1px solid #fff; border-right-color: #444; border-bottom-color: #444; display: grid; place-items: center; }
.minis button:first-child { width: 15px; }

/* 3D view */
.view { flex: 1; min-width: 0; display: flex; flex-direction: column; }
.view-tabs { display: flex; align-items: flex-end; height: 23px; border-bottom: 1px solid #aaa; flex: none; }
.vt { height: 19px; padding: 0 4px; font-size: 11px; border-right: 1px solid #ccc; }
.vt.on { height: 22px; width: 45px; text-align: left; padding: 0 8px 3px; background: #fff; }
.stage { flex: 1; display: flex; min-height: 0; }
.canvas { flex: 1; min-width: 0; position: relative; background: linear-gradient(#e2f7ff, #cfdff5 45%, #b3c8e8); border: 1px solid #667; border-top: 0; }
.model { position: absolute; inset: 0; width: 100%; height: 100%; }
.model .cube { font: bold 11px "Liberation Sans", Arial, sans-serif; fill: #93989e; text-anchor: middle; }
.model .cube.small { font-size: 9px; }
.model .cube.mid { font-size: 10px; }
.axes { position: absolute; left: 2px; bottom: 1px; width: 83px; height: 83px; border: 2px solid #4a5566; border-top-color: #d8e4f4; border-left-color: #d8e4f4; background: #b5cae9; }
.axes text { font: 14px "Liberation Sans", Arial, sans-serif; }
.level { position: absolute; left: 300px; bottom: 0; height: 19px; display: flex; background: linear-gradient(#fff, #dcdcdc); color: #222; }
.mode { width: 81px; font-weight: bold; border-right: 1px solid #ccc; }
.lvl { width: 257px; text-align: left; padding-left: 9px; }
.step { width: 19px; border-left: 1px solid #666; display: grid; place-items: center; }
.t-up, .t-down { border: 5px solid transparent; border-bottom: 6px solid #555; border-top: 0; }
.t-down { border-top: 6px solid #555; border-bottom: 0; }
.vuebtn { position: absolute; right: 0; bottom: 0; width: 116px; height: 19px; background: #c4d6ee; color: #98a8c0; font-size: 12px; }
.edge { width: 6px; background: #f0f0f0; display: flex; flex-direction: column; overflow: hidden; }
.edge-thumb { height: 116px; margin: 180px 0 auto; background: #cdcdcd; }
.view-foot { display: flex; align-items: center; height: 19px; flex: none; }
.disp { display: flex; gap: 3px; padding-left: 2px; }
.disp button { width: 20px; height: 16px; border: 1px solid #c8c8c8; background: #f6f6f0; display: grid; place-items: center; }
.disp button svg { width: 18px; height: 14px; }
.disp .on { border-color: #3c7fb8; background: #e6f0f8; }
.view-foot .left { margin-left: 6px; }
.track { flex: 1; height: 15px; display: flex; }
.track-thumb { width: 322px; margin-left: 199px; background: #c1c1c1; }
.r3 { border-left: 1px solid #bbb; margin-left: 3px; padding: 0 8px 0 6px; }

/* Bottom */
.cmd { height: 18px; flex: none; border-top: 1px solid #ddd; }
.cmd-field { display: block; width: 10px; height: 14px; margin-top: 2px; background: #fff; }
.status { display: grid; grid-template-columns: 1fr 213px 36px 49px 23px 49px 150px 196px 97px 55px; height: 20px; flex: none; border-top: 1px solid #ddd; border-bottom: 1px solid #222; font: 11px/18px "Noto Sans", sans-serif; }
.st { display: flex; align-items: center; gap: 6px; padding-left: 7px; border-left: 1px solid #d4d4d4; white-space: nowrap; overflow: hidden; }
.st.icons { padding-left: 0; border: 0; }
.st.res { padding-left: 1px; }
.icons span { color: #333; }
.dot { width: 12px; height: 12px; border-radius: 50%; background: radial-gradient(circle at 40% 30%, #fff27a, #e9b800); border: 1px solid #a88400; }
.st.sec { padding-left: 9px; }
```

FILE: model.js
```js
const root = document.getElementById('model');
const out = [];
const pts = a => a.map(p => p[0].toFixed(1) + ',' + p[1].toFixed(1)).join(' ');
const poly = (a, fill, stroke, w) => out.push(`<polygon points="${pts(a)}" fill="${fill}"${stroke ? ` stroke="${stroke}" stroke-width="${w || 1}"` : ''}/>`);
const path = (d, stroke, w) => out.push(`<path d="${d}" fill="none" stroke="${stroke}" stroke-width="${w}"/>`);
const mix = (a, b, t) => [a[0] + (b[0] - a[0]) * t, a[1] + (b[1] - a[1]) * t];
const down = (p, d) => [p[0], p[1] + d];
const len = (a, b) => Math.hypot(b[0] - a[0], b[1] - a[1]);
const seg = (a, b) => `M${a[0].toFixed(1)} ${a[1].toFixed(1)}L${b[0].toFixed(1)} ${b[1].toFixed(1)}`;

const LIGHT = '#66c6d4', DARK = '#2c757f', TOP = '#45a5b0', EDGE = '#1b7a80';
const SLAB = '#8e9c66', BARS = '#22431f';

/* Plan grid at roof level: rows run right and up, columns run right and down */
const rows = [
  [[504,231],[550,217],[587,208],[625,199],[669,189],[742,170],[791,156],[830,146]],
  [[553,253],[597,241],[635,231],[673,223],[717,212],[790,194],[838,182],[879,171]],
  [[592,273],[637,262],[673,253],[713,243],[753,232],[827,212],[875,201],[918,191]],
  [, , , , [780,247],[853,228],[902,217]],
  [, , , , [804,258],[880,239],[927,229]],
  [, , , , [836,276],[912,256],[960,244]]
];
const levels = [0, 48, 95, 143, 190, 237, 285];
const BASE = 331;
const has = (r, c) => r >= 0 && c >= 0 && r < 5 && c < 7 && (r < 2 || (c >= 4 && c < 6));

function mesh(a, b, c, d) {
  poly([a, b, c, d], SLAB);
  let s = '', t = '';
  const n = Math.max(3, Math.round(len(a, b) / 6)), m = Math.max(3, Math.round(len(a, d) / 6));
  for (let i = 0; i <= n; i++) s += seg(mix(a, b, i / n), mix(d, c, i / n));
  for (let j = 0; j <= m; j++) t += seg(mix(a, d, j / m), mix(b, c, j / m));
  path(s, BARS, 1);
  path(t, BARS, 1.3);
}
function rowBeam(a, b, h) {
  poly([a, b, down(b, h), down(a, h)], LIGHT, EDGE);
  path(seg(down(a, 1), down(b, 1)), TOP, 2);
}
function colBeam(a, b, h) {
  poly([a, b, down(b, h), down(a, h)], DARK, EDGE);
  path(seg([a[0] + 1, a[1] - 1], [b[0] + 1, b[1] - 1]), TOP, 2);
}
function column(p, y0, y1) {
  const x = p[0];
  out.push(`<rect x="${x - 4}" y="${p[1] + y0}" width="4" height="${y1 - y0}" fill="${DARK}"/><rect x="${x - .5}" y="${p[1] + y0}" width="5" height="${y1 - y0}" fill="${LIGHT}" stroke="${EDGE}" stroke-width=".7"/>`);
}

/* Raft foundation */
const raft = [[488,557],[625,520],[742,497],[830,474],[933,524],[920,528],[930,551],[975,575],[834,611],[750,569],[588,607]];
out.push(`<clipPath id="raft"><polygon points="${pts(raft)}"/></clipPath>`);
poly([[908,528],[933,521],[933,529],[914,534]], '#e4dfd8', '#554');
poly(raft, '#66a672');
let g = '';
for (let x = 0; x < 1200; x += 7) g += seg([x, 400], [x + 500, 660]);
for (let y = 500; y < 860; y += 4) g += seg([450, y], [1000, y - 132]);
out.push(`<g clip-path="url(#raft)"><path d="${g}" fill="none" stroke="#1a4c2a" stroke-width="1.200"/></g>`);
[[[488,557],[588,607],8,1],[[588,607],[750,569],8,0],[[750,569],[834,611],7,1],[[834,611],[975,575],7,0]].forEach(([a, b, h, dark]) => {
  poly([a, b, down(b, h), down(a, h)], dark ? '#8b7c72' : '#e6e2dc', '#3d4a38');
  let s = '';
  const n = Math.round(len(a, b) / 7);
  for (let i = 1; i < n; i++) { const p = mix(a, b, i / n); s += seg(p, down(p, h)); }
  path(s, '#3a2c28', 1);
  path(seg(down(a, h / 2), down(b, h / 2)), '#653a34', 1);
});

for (let k = levels.length - 1; k >= 0; k--) {
  const off = levels[k], next = k === levels.length - 1 ? BASE : levels[k + 1];
  rows.forEach(r => r.forEach(p => p && column(p, off, next)));
  const P = (r, c) => down(rows[r][c], off);
  /* rear cantilever strip */
  if (k < 6) {
    mesh([538,213 + off],[614,194 + off],[625,199 + off],[550,218 + off]);
    path(seg([574,202 + off],[588,208 + off]) + seg([613,193 + off],[627,199 + off]), DARK, 4);
  }
  for (let r = 0; r < rows.length; r++) {
    for (let c = 0; c < 8; c++) {
      if (!has(r, c)) continue;
      const open = k === 6 && (r !== 1 && c !== 4) || (k === 6 && c === 0) || (k === 0 && r === 0 && c === 3);
      if (!open) mesh(P(r, c), P(r, c + 1), P(r + 1, c + 1), P(r + 1, c));
    }
    for (let c = 0; c < 7; c++) {
      if (has(r, c) || has(r - 1, c)) rowBeam(P(r, c), P(r, c + 1), !has(r, c) || k === 6 ? 9 : 6);
    }
    for (let c = 0; c < 8; c++) {
      if (has(r, c) || has(r, c - 1)) {
        const left = !has(r, c - 1);
        colBeam(P(r, c), P(r + 1, c), left || k === 6 ? 8 : 3);
      }
    }
  }
}

/* Stair tower */
column([662,184], 0, 40);
rowBeam([627,198],[666,188], 8);
column([625,152], 0, 46);
column([715,168], 0, 44);
column([673,178], 0, 44);
mesh([612,148],[655,137],[715,167],[673,178]);
rowBeam([626,153],[668,143], 4);
rowBeam([612,147],[655,136], 3);
colBeam([655,136],[715,166], 3);
colBeam([612,147],[673,177], 6);
rowBeam([673,177],[716,166], 6);
out.push('<circle cx="836" cy="276" r="2" fill="#9fd84a"/>');

/* View cube */
out.push('<ellipse cx="1212" cy="236" rx="38" ry="12" fill="#8fa0b8" opacity=".35"/>');
const dash = 'stroke="#9aa0a8" stroke-dasharray="8 4"';
out.push(`<polygon points="1161,170 1204,158 1247,168 1199,184" fill="#f1f3f5" ${dash}/>`);
out.push(`<polygon points="1161,170 1199,184 1197,243 1166,222" fill="#dcdfe3" ${dash}/>`);
out.push(`<polygon points="1199,184 1247,168 1245,220 1197,243" fill="#e6e9ec" ${dash}/>`);
out.push('<text class="cube mid" transform="translate(1203 167) rotate(176)">HAUT</text>');
out.push('<text class="cube small" transform="translate(1179 208) rotate(16)">DROITE</text>');
out.push('<text class="cube mid" transform="translate(1222 211) rotate(-12)">ARRIÈRE</text>');
root.innerHTML = out.join('');
```
